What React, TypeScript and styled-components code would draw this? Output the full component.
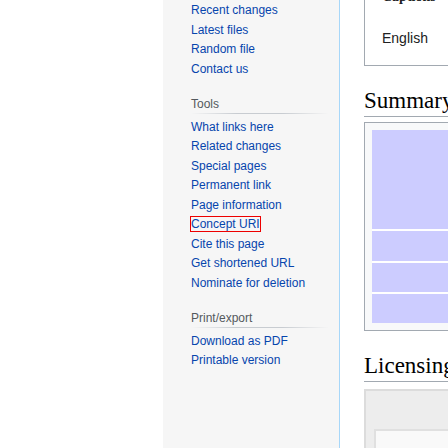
import React from "react"
import styled, { createGlobalStyle } from 'styled-components';


// Styled Components ======================================================

const GlobalStyle = createGlobalStyle`
    html, body {
        margin: 0;
        padding: 0;
        background: #ffffff;
        overflow: hidden;
    }
    body {
        font-family: "Liberation Sans", Arial, sans-serif;
    }
`;

let Page = styled.div`
    display: flex;
    width: 448px;
    height: 448px;
    overflow: hidden;
`;

let Gutter = styled.div`
    flex: 0 0 163px;
`;

let Sidebar = styled.nav`
    flex: 0 0 177px;
    box-sizing: border-box;
    background: #f6f6f6;
    border-right: 1px solid #a7d7f9;
    padding: 1px 10px 0 28px;
`;

let Portal = styled.div`
    & + & {
        margin-top: 15.5px;
    }
`;

let PortalHeading = styled.h3`
    margin: 0;
    padding: 3px 0 3px;
    font-size: 12px;
    line-height: 13.5px;
    font-weight: normal;
    color: #54595d;
    background-image: linear-gradient(to right, rgba(200, 204, 209, 0) 0, #c8ccd1 33%, #c8ccd1 66%, rgba(200, 204, 209, 0) 100%);
    background-position: center bottom;
    background-repeat: no-repeat;
    background-size: 100% 1px;
`;

let LinkList = styled.ul<{ $afterHeading?: boolean }>`
    list-style: none;
    margin: ${p => p.$afterHeading ? '3.5px' : '0'} 0 0 0;
    padding: 0;
`;

let LinkItem = styled.li`
    font-size: 12px;
    line-height: 13.5px;
    padding: 3px 0;
    white-space: nowrap;
`;

let SideLink = styled.a<{ $focused?: boolean }>`
    color: #0645ad;
    text-decoration: none;
    outline: ${p => p.$focused ? '1px solid #ee0000' : 'none'};
`;

let Content = styled.main`
    flex: 0 0 560px;
    padding-left: 24px;
    margin-top: -30px;
`;

let CaptionBox = styled.section`
    border: 1px solid #a2a9b1;
    padding: 17px 17px 17px;
`;

let CaptionTitle = styled.div`
    font-family: "Liberation Serif", "Times New Roman", serif;
    font-weight: bold;
    font-size: 14px;
    line-height: 17px;
    color: #202122;
`;

let CaptionLang = styled.div`
    margin-top: 23px;
    font-size: 14px;
    line-height: 20px;
    color: #202122;
`;

let SectionHeading = styled.h2<{ $gap: number }>`
    margin: 20px 0 ${p => p.$gap}px;
    padding: 0;
    font-family: "Liberation Serif", "Times New Roman", serif;
    font-weight: normal;
    font-size: 23px;
    line-height: 30px;
    color: #000000;
    border-bottom: 1px solid #a2a9b1;
    white-space: nowrap;
`;

let InfoBox = styled.div`
    border: 1px solid #a2a9b1;
    background: #f8f9fa;
    padding: 7px;
`;

let InfoRows = styled.div`
    display: flex;
    flex-direction: column;
    gap: 2px;
    background: #ffffff;
`;

let InfoRow = styled.div<{ $h: number }>`
    height: ${p => p.$h}px;
    background: #ccccff;
`;

let LicenseBox = styled.div`
    border: 2px solid #dcdcdc;
    background: #ededed;
    padding: 38px 8px 8px;
`;

let LicenseInner = styled.div`
    border: 2px solid #e0e0e0;
    background: #f9f9f9;
    height: 80px;
`;
// =========================================================================


const navigation = ['Recent changes', 'Latest files', 'Random file', 'Contact us'];
const tools = [
    'What links here', 'Related changes', 'Special pages', 'Permanent link',
    'Page information', 'Concept URI', 'Cite this page', 'Get shortened URL',
    'Nominate for deletion',
];
const printExport = ['Download as PDF', 'Printable version'];


export default function App() {
    return (
        <>
            <GlobalStyle />
            <Page>
                <Gutter />
                <Sidebar>
                    <Portal>
                        <LinkList>
                            {navigation.map(label =>
                                <LinkItem key={label}><SideLink href="#">{label}</SideLink></LinkItem>)}
                        </LinkList>
                    </Portal>
                    <Portal>
                        <PortalHeading>Tools</PortalHeading>
                        <LinkList $afterHeading>
                            {tools.map(label =>
                                <LinkItem key={label}>
                                    <SideLink href="#" $focused={label === 'Concept URI'}>{label}</SideLink>
                                </LinkItem>)}
                        </LinkList>
                    </Portal>
                    <Portal>
                        <PortalHeading>Print/export</PortalHeading>
                        <LinkList $afterHeading>
                            {printExport.map(label =>
                                <LinkItem key={label}><SideLink href="#">{label}</SideLink></LinkItem>)}
                        </LinkList>
                    </Portal>
                </Sidebar>
                <Content>
                    <CaptionBox>
                        <CaptionTitle>Captions</CaptionTitle>
                        <CaptionLang>English</CaptionLang>
                    </CaptionBox>
                    <SectionHeading $gap={5}>Summary</SectionHeading>
                    <InfoBox>
                        <InfoRows>
                            <InfoRow $h={99} />
                            <InfoRow $h={30} />
                            <InfoRow $h={29} />
                            <InfoRow $h={29} />
                        </InfoRows>
                    </InfoBox>
                    <SectionHeading $gap={7}>Licensing</SectionHeading>
                    <LicenseBox>
                        <LicenseInner />
                    </LicenseBox>
                </Content>
            </Page>
        </>
    );
}
